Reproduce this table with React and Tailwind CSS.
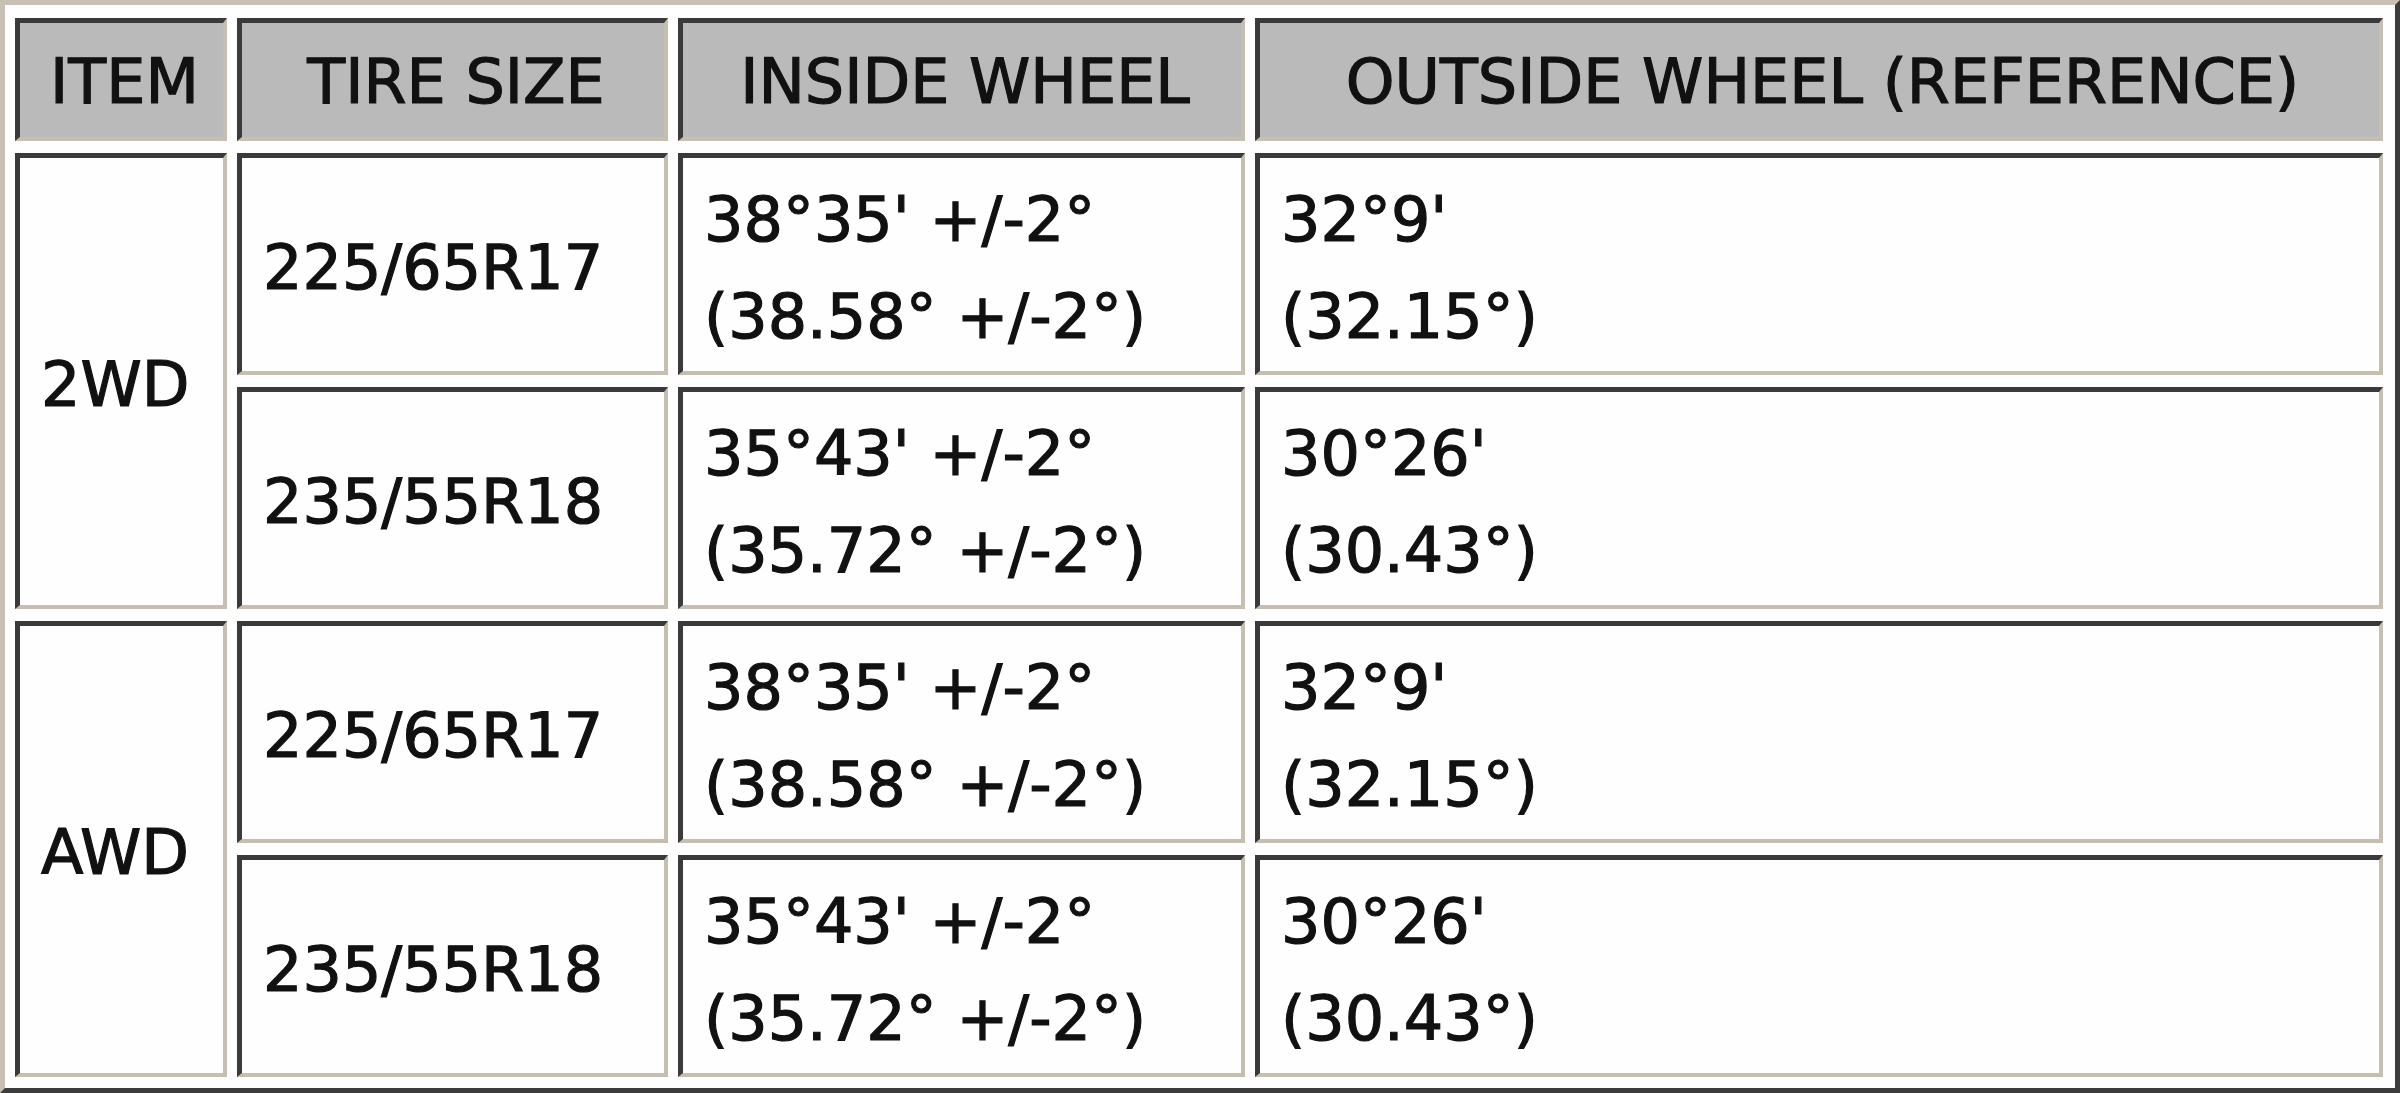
const data = [
  {
    item: "2WD",
    rows: [
      { tire: "225/65R17", inside: ["38°35' +/-2°", "(38.58° +/-2°)"], outside: ["32°9'", "(32.15°)"] },
      { tire: "235/55R18", inside: ["35°43' +/-2°", "(35.72° +/-2°)"], outside: ["30°26'", "(30.43°)"] },
    ],
  },
  {
    item: "AWD",
    rows: [
      { tire: "225/65R17", inside: ["38°35' +/-2°", "(38.58° +/-2°)"], outside: ["32°9'", "(32.15°)"] },
      { tire: "235/55R18", inside: ["35°43' +/-2°", "(35.72° +/-2°)"], outside: ["30°26'", "(30.43°)"] },
    ],
  },
];

// inset look, like an old html table with border="1"
const cell =
  "border-t-[5px] border-l-[5px] border-b-[4px] border-r-[4px] border-t-[#3a3a3a] border-l-[#3a3a3a] border-b-[#c6bfb1] border-r-[#c6bfb1]";

function Head({ children }) {
  return (
    <div className={`${cell} bg-[#bababa] flex items-center justify-center pl-[6px] pt-[2px]`}>
      {children}
    </div>
  );
}

function Body({ lines, className = "" }) {
  return (
    <div className={`${cell} bg-[#fefefe] flex flex-col justify-center pl-[21px] pt-[6px] leading-[97px] ${className}`}>
      {lines.map((l) => (
        <span key={l}>{l}</span>
      ))}
    </div>
  );
}

export default function App() {
  return (
    <div
      className="w-[2400px] h-[1093px] bg-[#fefefe] border-[5px] border-t-[#c8c0b0] border-l-[#c8c0b0] border-b-[#3c3c3c] border-r-[#3c3c3c] pt-[13px] pl-[10px] pr-[12px] text-[62px] text-[#111] [-webkit-text-stroke:1.2px_#111]"
      style={{ fontFamily: '"DejaVu Sans", Verdana, sans-serif' }}
    >
      <div className="grid grid-cols-[212px_431px_567px_1fr] grid-rows-[123px_222px_222px_222px_222px] gap-x-[10px] gap-y-[12px]">
        <Head>ITEM</Head>
        <Head>TIRE SIZE</Head>
        <Head>INSIDE WHEEL</Head>
        <Head>OUTSIDE WHEEL (REFERENCE)</Head>

        {data.map((group) =>
          group.rows.map((r, i) => (
            <>
              {i === 0 && <Body lines={[group.item]} className="row-span-2" />}
              <Body lines={[r.tire]} />
              <Body lines={r.inside} />
              <Body lines={r.outside} />
            </>
          ))
        )}
      </div>
    </div>
  );
}
